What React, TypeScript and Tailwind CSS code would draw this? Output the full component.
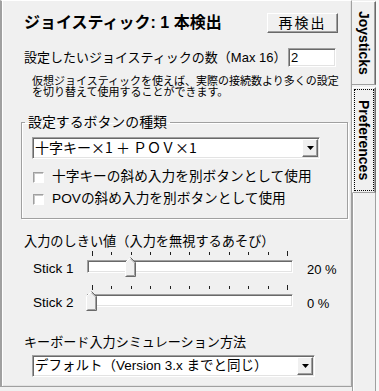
import React from "react";

const sunken =
  "border border-t-[#a0a0a0] border-l-[#a0a0a0] border-r-white border-b-white shadow-[inset_1px_1px_0_#696969,inset_-1px_-1px_0_#e3e3e3]";
const raised =
  "border border-t-white border-l-white border-r-[#696969] border-b-[#696969] shadow-[inset_-1px_-1px_0_#a0a0a0]";

function Combo({ children, className }: { children: React.ReactNode; className: string }) {
  return (
    <div className={`flex h-[22px] items-center bg-white ${sunken} ${className}`}>
      <span className="flex-1 whitespace-nowrap pl-[2px] text-[13.5px] leading-none">{children}</span>
      <div className={`mr-[1px] flex h-[18px] w-[16px] items-center justify-center bg-[#f0f0f0] ${raised}`}>
        <svg width="7" height="4" viewBox="0 0 7 4">
          <path d="M0 0h7L3.5 4z" fill="#000" />
        </svg>
      </div>
    </div>
  );
}

function Check({ label }: { label: string }) {
  return (
    <div className="flex h-[14px] items-center">
      <div className="ml-[1px] h-[11px] w-[11px] border border-t-[#a0a0a0] border-l-[#a0a0a0] border-r-white border-b-white bg-white shadow-[inset_1px_1px_0_#c8c8c8]" />
      <span className="ml-[8px] whitespace-nowrap text-[13.7px] leading-none">{label}</span>
    </div>
  );
}

function Thumb() {
  return (
    <svg width="11" height="20" viewBox="0 0 11 20">
      <path d="M0.5 19.5V5.5L5.5 0.5L10.5 5.5V19.5Z" fill="#f0f0f0" />
      <path d="M0.5 19V5.5L5.5 0.5" stroke="#fff" fill="none" />
      <path d="M5.5 0.5L10.5 5.5V19.5H0.5" stroke="#696969" fill="none" />
      <path d="M5.5 1.9L9.5 5.9V18.5H1.5" stroke="#a0a0a0" fill="none" />
    </svg>
  );
}

function Slider({ label, value }: { label: string; value: number }) {
  const ticks = Array.from({ length: 11 }, (_, i) => i);
  return (
    <div className="ml-[31px] grid grid-cols-[54px_206px_auto] grid-rows-[5px_13px] gap-y-[4px]">
      <div />
      <div className="flex items-start justify-between px-[4.5px]">
        {ticks.map((t) => (
          <div
            key={t}
            className={t === 0 || t === 10 ? "h-[5px] w-px bg-[#202020]" : "mt-[1px] h-[3px] w-px bg-[#202020]"}
          />
        ))}
      </div>
      <div />
      <div className="self-center pt-[4px] text-[13.5px] leading-none">{label}</div>
      <div className={`relative bg-white ${sunken}`}>
        <div className="absolute top-[-4px]" style={{ left: 3 + (value / 100) * 197 - 5.5 }}>
          <Thumb />
        </div>
      </div>
      <div className="ml-[14px] self-center pt-[6px] text-[13px] leading-none">{value} %</div>
    </div>
  );
}

export default function App() {
  return (
    <div className="flex h-[391px] w-[379px] overflow-hidden bg-[#f0f0f0] font-['Liberation_Sans','Noto_Sans_CJK_JP',sans-serif] text-black">
      <div className="flex h-[387px] w-[352px] flex-col border-l-2 border-t border-r border-b border-l-[#a0a0a0] border-t-white border-r-[#a0a0a0] border-b-[#a0a0a0] shadow-[inset_1px_0_0_#fff,inset_-1px_-1px_0_#e3e3e3]">
        <div className="ml-[22px] mr-[13px] mt-[12px] flex h-[20px] items-center justify-between">
          <span className="whitespace-nowrap text-[16px] font-bold leading-none">ジョイスティック: 1 本検出</span>
          <button type="button" className={`h-[20px] w-[71px] bg-[#f0f0f0] text-[14px] leading-none tracking-[2px] ${raised}`}>
            再検出
          </button>
        </div>

        <div className="ml-[22px] mr-[15px] mt-[15px] flex h-[19px] items-center">
          <span className="whitespace-nowrap text-[13px] leading-none">設定したいジョイスティックの数（Max 16）</span>
          <div className={`ml-auto flex h-[19px] w-[48px] items-center bg-white pl-[2px] text-[13px] leading-none ${sunken}`}>2</div>
        </div>

        <p className="ml-[30px] mt-[9px] whitespace-nowrap text-[11px] leading-[11px]">
          仮想ジョイスティックを使えば、実際の接続数より多くの設定
          <br />
          を切り替えて使用することができます。
        </p>

        <fieldset className="ml-[19px] mt-[17px] w-[327px] border border-[#a0a0a0] px-[3px] pb-[12px] shadow-[inset_1px_1px_0_#fff,1px_1px_0_#fff]">
          <legend className="px-[3px] text-[13.9px] leading-[15px]">設定するボタンの種類</legend>
          <div className="flex flex-col px-[7px] pt-[7px]">
            <Combo className="w-[288px]">
              <span className="font-['Noto_Sans_CJK_JP'] text-[14px]">十字キー×1 ＋ ＰＯＶ×1</span>
            </Combo>
            <div className="mt-[11px]">
              <Check label="十字キーの斜め入力を別ボタンとして使用" />
            </div>
            <div className="mt-[8px]">
              <Check label="POVの斜め入力を別ボタンとして使用" />
            </div>
          </div>
        </fieldset>

        <div className="ml-[22px] mt-[16px] whitespace-nowrap text-[13.2px] leading-[14px]">入力のしきい値（入力を無視するあそび）</div>
        <div className="mt-[2px]">
          <Slider label="Stick 1" value={20} />
        </div>
        <div className="mt-[12px]">
          <Slider label="Stick 2" value={0} />
        </div>

        <div className="ml-[22px] mt-[29px] whitespace-nowrap text-[13.1px] leading-[14px]">キーボード入力シミュレーション方法</div>
        <Combo className="ml-[30px] mt-[5px] w-[283px]">デフォルト（Version 3.x までと同じ）</Combo>
      </div>

      <div className="flex w-[24px] flex-col">
        <div className="mt-[1px] flex h-[84px] items-center justify-center border-t border-r border-b border-t-white border-r-[#696969] border-b-[#a0a0a0] shadow-[inset_-1px_0_0_#a0a0a0]">
          <span className="text-[14px] font-bold leading-none [writing-mode:vertical-rl]">Joysticks</span>
        </div>
        <div className="mt-[2px] flex h-[106px] border border-l-white border-t-white border-r-[#696969] border-b-[#a0a0a0] p-[1px] shadow-[inset_-1px_0_0_#a0a0a0]">
          <div className="flex flex-1 items-center justify-center border border-dotted border-black">
            <span className="text-[14px] font-bold leading-none [writing-mode:vertical-rl]">Preferences</span>
          </div>
        </div>
        <div className="flex-1 border-l border-r border-l-[#a0a0a0] border-r-[#a0a0a0] shadow-[inset_1px_0_0_#fff]" />
      </div>
      <div className="w-[3px] bg-[#f8f8f8]" />
    </div>
  );
}
